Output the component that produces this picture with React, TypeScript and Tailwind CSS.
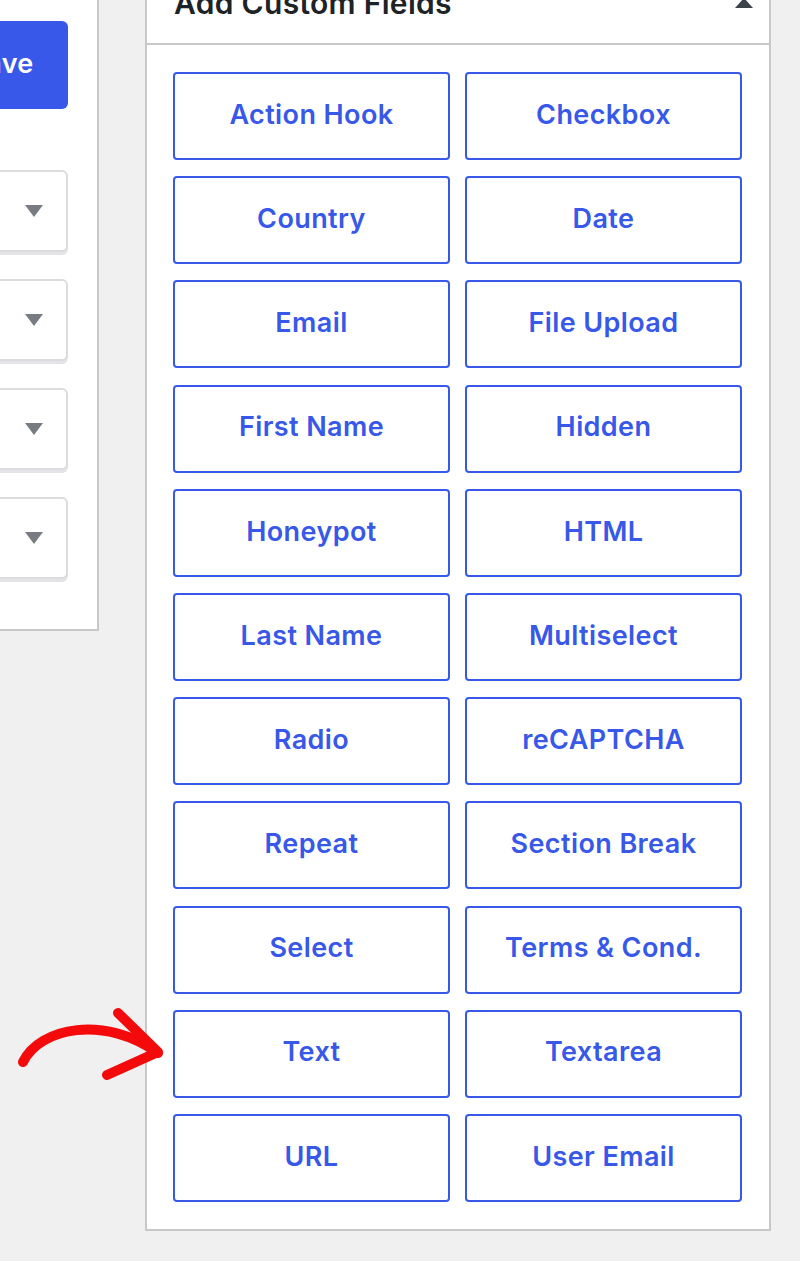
const fields = [
  "Action Hook",
  "Checkbox",
  "Country",
  "Date",
  "Email",
  "File Upload",
  "First Name",
  "Hidden",
  "Honeypot",
  "HTML",
  "Last Name",
  "Multiselect",
  "Radio",
  "reCAPTCHA",
  "Repeat",
  "Section Break",
  "Select",
  "Terms & Cond.",
  "Text",
  "Textarea",
  "URL",
  "User Email",
];

const Dropdown = () => {
  return (
    <div className="w-[220px] h-[82px] shrink-0 bg-white border-2 border-[#dcdcde] rounded-[6px] shadow-[0_3px_0_#e4e4e6] flex items-center justify-end pr-[23px]">
      <span className="w-0 h-0 border-l-[9px] border-r-[9px] border-t-[12px] border-l-transparent border-r-transparent border-t-[#787c82]" />
    </div>
  );
};

const App = () => {
  return (
    <div
      className="relative w-[800px] h-[1261px] bg-[#f0f0f0] overflow-hidden flex items-start"
      style={{ fontFamily: "Inter, 'Open Sans', sans-serif" }}
    >
      <div className="w-[99px] h-[631px] shrink-0 bg-white border-r-2 border-b-2 border-[#c8c8c8] overflow-hidden flex flex-col items-end pr-[29px] pt-[21px]">
        <button className="w-[134px] h-[88px] shrink-0 bg-[#3858e9] rounded-[6px] text-white text-[27px] font-semibold tracking-[0.01em] pb-[2px]">
          Save
        </button>
        <div className="flex flex-col items-end gap-[27px] mt-[61px]">
          <Dropdown />
          <Dropdown />
          <Dropdown />
          <Dropdown />
        </div>
      </div>

      <div className="ml-[46px] w-[626px] shrink-0 -mt-[30px] bg-white border-2 border-[#c8c8c8]">
        <div className="h-[73px] border-b-2 border-[#c8c8c8] flex items-start justify-between pl-[27px] pr-[16px] pt-[13px]">
          <h2 className="text-[30px] leading-[36px] font-semibold tracking-[0.01em] text-[#1d2327]">
            Add Custom Fields
          </h2>
          <span className="w-0 h-0 mt-[13px] border-l-[9px] border-r-[9px] border-b-[10px] border-l-transparent border-r-transparent border-b-[#3c434a]" />
        </div>
        <div className="grid grid-cols-2 gap-x-[15px] gap-y-[16.2px] pl-[26px] pr-[27px] pt-[27px] pb-[27px]">
          {fields.map((f) => (
            <button
              key={f}
              className="h-[88px] border-2 border-[#3858e9] rounded-[4px] bg-white text-[#3858e9] text-[27px] font-semibold tracking-[0.015em] pb-[2px]"
            >
              {f}
            </button>
          ))}
        </div>
      </div>

      <svg
        className="absolute left-[15px] top-[1005px]"
        width="150"
        height="80"
        viewBox="0 0 150 80"
        fill="none"
      >
        <path
          d="M8 57 C 25 22, 90 10, 143 48"
          stroke="#f40a0a"
          strokeWidth="10"
          strokeLinecap="round"
        />
        <path
          d="M103 8 L 143 47 L 92 70"
          stroke="#f40a0a"
          strokeWidth="10"
          strokeLinecap="round"
          strokeLinejoin="round"
        />
      </svg>
    </div>
  );
};

export default App;
